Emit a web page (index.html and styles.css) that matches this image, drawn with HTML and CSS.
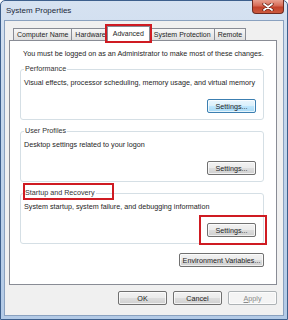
FILE: index.html
```html
<!DOCTYPE html>
<html lang="en">
<head>
    <meta charset="UTF-8">
    <title>System Properties</title>
    <link rel="stylesheet" href="styles.css">
</head>
<body>

    <div class="window">
        <!-- Title bar -->
        <div class="titlebar">
            <span class="title">System Properties</span>
            <div class="close-btn">
                <svg width="12" height="8" viewBox="0 0 12 8">
                    <path d="M2 1 L10 7 M10 1 L2 7" stroke="#5a1a10" stroke-width="3.2" stroke-linecap="round"/>
                    <path d="M2 1 L10 7 M10 1 L2 7" stroke="#fff" stroke-width="1.8" stroke-linecap="round"/>
                </svg>
            </div>
        </div>

        <div class="client">
            <!-- Tabs -->
            <div class="tabs">
                <div class="tab">Computer Name</div>
                <div class="tab">Hardware</div>
                <div class="tab active">Advanced</div>
                <div class="tab">System Protection</div>
                <div class="tab">Remote</div>
            </div>

            <div class="panel">
                <p class="notice">You must be logged on as an Administrator to make most of these changes.</p>

                <fieldset class="group">
                    <legend>Performance</legend>
                    <p class="desc">Visual effects, processor scheduling, memory usage, and virtual memory</p>
                    <div class="group-actions">
                        <button class="btn btn-focus">Settings...</button>
                    </div>
                </fieldset>

                <fieldset class="group">
                    <legend>User Profiles</legend>
                    <p class="desc">Desktop settings related to your logon</p>
                    <div class="group-actions">
                        <button class="btn">Settings...</button>
                    </div>
                </fieldset>

                <fieldset class="group">
                    <legend>Startup and Recovery</legend>
                    <p class="desc">System startup, system failure, and debugging information</p>
                    <div class="group-actions">
                        <button class="btn">Settings...</button>
                    </div>
                    <div class="mark mark-label"></div>
                    <div class="mark mark-button"></div>
                </fieldset>

                <div class="env-row">
                    <button class="btn btn-wide">Environment Variables...</button>
                </div>
            </div>

            <!-- Dialog buttons -->
            <div class="dialog-buttons">
                <button class="btn btn-dialog">OK</button>
                <button class="btn btn-dialog">Cancel</button>
                <button class="btn btn-dialog" disabled><u>A</u>pply</button>
            </div>
        </div>
    </div>

</body>
</html>
```

FILE: styles.css
```css
body {
    margin: 0;
    font-family: 'Liberation Sans', Arial, sans-serif;
    font-size: 7.2px;
    color: #1e1e1e;
    background: #fff;
}

p {
    margin: 0;
}

.window {
    width: 288px;
    height: 320px;
    box-sizing: border-box;
    border: 1px solid #3d5f8c;
    border-radius: 5px 5px 0 0;
    background: linear-gradient(to bottom, #d6e2f1 0%, #c3d6ec 40%, #b3cae6 100%);
    display: flex;
    flex-direction: column;
}

/* Title bar */
.titlebar {
    height: 20px;
    display: flex;
    justify-content: space-between;
    align-items: flex-start;
    padding-left: 5px;
}

.title {
    font-size: 8px;
    color: #1b2838;
    line-height: 19px;
}

.close-btn {
    width: 32px;
    height: 14px;
    margin-top: -1px;
    margin-right: 3px;
    box-sizing: border-box;
    border: 1px solid #6e2a20;
    border-top: none;
    border-radius: 0 0 4px 4px;
    background: linear-gradient(to bottom, #e9a08f 0%, #d66a55 45%, #c2412a 55%, #cc5a3e 100%);
    display: flex;
    align-items: center;
    justify-content: center;
}

/* Client area */
.client {
    flex: 1;
    margin: 0 4px 4px 4px;
    background: #f0f0f0;
    box-shadow: 0 0 0 1px #8aa1bf;
    padding: 5px 6px 6px 4px;
    display: flex;
    flex-direction: column;
}

.tabs {
    display: flex;
    align-items: flex-end;
    padding-left: 4px;
    height: 14px;
}

.tab {
    height: 11px;
    line-height: 11px;
    padding: 0 3px;
    font-size: 7px;
    border: 1px solid #898c95;
    border-bottom: none;
    margin-right: -1px;
    background: linear-gradient(to bottom, #f7f7f7 0%, #ebebeb 50%, #dedede 100%);
    white-space: nowrap;
}

.tab.active {
    position: relative;
    z-index: 2;
    height: 14px;
    line-height: 13px;
    margin: 0 -1px -1px -2px;
    padding: 0 5px;
    background: #fff;
    outline: 2px solid #cf1b22;
}

.tab.active + .tab {
    margin-left: 1px;
}

.panel {
    background: #fff;
    border: 1px solid #898c95;
    padding: 8px 12px 17px 10px;
    display: flex;
    flex-direction: column;
}

.notice {
    line-height: 10px;
    padding-left: 3px;
    white-space: nowrap;
}

/* Group boxes */
.group {
    position: relative;
    margin: 6px 0 0 0;
    padding: 0 7px 6px 3px;
    border: 1px solid #d5dfe5;
    border-radius: 3px;
}

.group:first-of-type {
    margin-top: 5px;
}

.group legend {
    padding: 0 1px;
    margin-left: 0;
    line-height: 10px;
    color: #333;
}

.desc {
    line-height: 10px;
    margin-top: 4px;
    white-space: nowrap;
}

.group-actions {
    display: flex;
    justify-content: flex-end;
    margin-top: 11px;
}

/* Red annotation boxes */
.mark {
    position: absolute;
    border: 2px solid #cf1b22;
}

.mark-label {
    left: 2px;
    top: -15px;
    width: 87px;
    height: 13px;
}

.mark-button {
    right: -4px;
    bottom: -2px;
    width: 64px;
    height: 26px;
}

/* Buttons */
.btn {
    font-family: 'Liberation Sans', Arial, sans-serif;
    font-size: 7.2px;
    color: #1e1e1e;
    height: 14px;
    width: 49px;
    padding: 0;
    border: 1px solid #707070;
    border-radius: 2px;
    background: linear-gradient(to bottom, #f2f2f2 0%, #ebebeb 49%, #dddddd 51%, #cfcfcf 100%);
    box-shadow: inset 0 0 0 1px rgba(255, 255, 255, 0.7);
}

.btn-focus {
    border-color: #3c7fb1;
    background: linear-gradient(to bottom, #eaf6fd 0%, #d9f0fc 49%, #bee6fd 51%, #a7d9f5 100%);
}

.btn-wide {
    width: 85px;
}

.btn:disabled {
    color: #8a8a8a;
    border-color: #adb2b5;
    background: #f4f4f4;
}

.env-row {
    display: flex;
    justify-content: flex-end;
    margin-top: 9px;
}

.dialog-buttons {
    display: flex;
    justify-content: flex-end;
    gap: 6px;
    margin-top: 6px;
}
```
